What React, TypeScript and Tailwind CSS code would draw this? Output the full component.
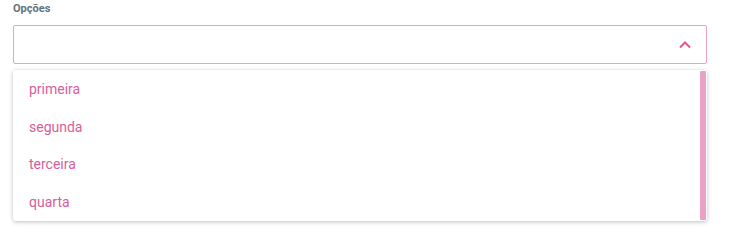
const options = ["primeira", "segunda", "terceira", "quarta"];

export default function App() {
    return (
        <div className="w-[735px] h-[247px] bg-white px-[13px] pt-[1px] font-['Roboto',sans-serif]">
            <label className="block text-[11px] leading-[16px] font-bold text-[#5f7282]">Opções</label>
            <div className="mt-[8px] w-[694px] h-[39px] border border-[#eaa2c4] rounded-[2px] flex items-center justify-end pr-[14px]">
                <svg width="14" height="9" viewBox="0 0 14 9" fill="none">
                    <path d="M2 7.5 L7 2.5 L12 7.5" stroke="#e0568f" strokeWidth="2" />
                </svg>
            </div>
            <div className="mt-[6px] w-[694px] h-[151px] bg-white rounded-[3px] shadow-[0_1px_4px_rgba(0,0,0,0.25)] flex">
                <ul className="flex-1 pt-[1px]">
                    {options.map((o) => (
                        <li key={o} className="h-[37.5px] flex items-center pl-[16px] text-[14px] text-[#d65e9a]">
                            {o}
                        </li>
                    ))}
                </ul>
                <div className="w-[6px] my-[1px] mr-[1px] bg-[#e9a1c5] rounded-[1px]" />
            </div>
        </div>
    );
}
